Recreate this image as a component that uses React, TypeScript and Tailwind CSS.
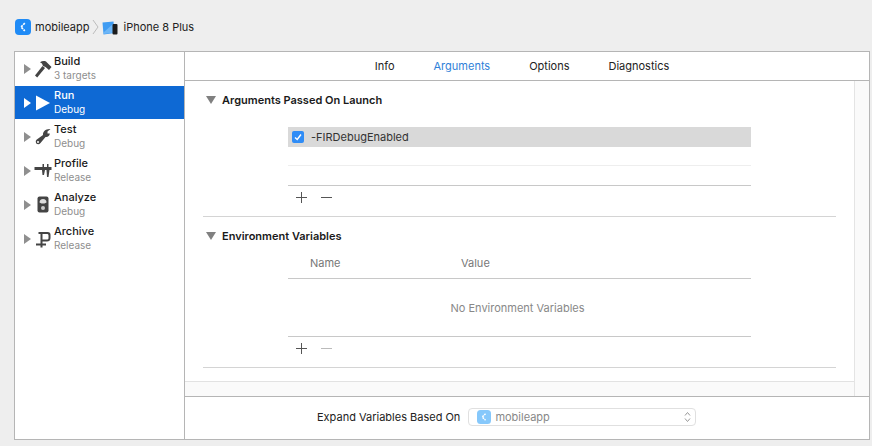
import { Fragment } from "react";

const font = "font-['Inter','Liberation_Sans',sans-serif]";

function Hammer() {
  return (
    <svg width="18" height="18" viewBox="0 0 18 18">
      <path d="M1 15.5 L8.5 6 L11 8 L3.2 17.5 Z" fill="#444" />
      <path d="M6 2.2 C8 1 10 0.8 12 1.5 L17.5 7 L15 10 L11.5 7 L9 6 L8 3.5 Z" fill="#444" />
    </svg>
  );
}

function PlayIcon() {
  return (
    <svg width="16" height="16" viewBox="0 0 16 16">
      <path d="M1 0.5 L15 8 L1 15.5 Z" fill="#fff" />
    </svg>
  );
}

function Wrench() {
  return (
    <svg width="16" height="18" viewBox="0 0 16 18">
      <path d="M15.5 1 L12.5 3.5 L12.5 5.5 L14.8 5.5 C14.8 8 12.5 9.5 10.5 9 L5.5 15 C4 17 1 16.5 0.8 14 C0.6 12.5 1.5 11.8 2.5 11 L8 7 C7.5 3.5 11 0.5 15.5 1 Z" fill="#444" />
      <circle cx="3" cy="14" r="1" fill="#fff" />
    </svg>
  );
}

function Caliper() {
  return (
    <svg width="18" height="14" viewBox="0 0 18 14">
      <path d="M0.5 3 H17.5 V6 H15.5 L14.5 13 H13 L12.5 6 H11 L10 11 H8.5 L8 6 H0.5 Z" fill="#444" />
      <path d="M8.5 0 H10 V3 H8.5 Z M13 0 H14.5 V3 H13 Z" fill="#444" />
    </svg>
  );
}

function Meter() {
  return (
    <svg width="12" height="17" viewBox="0 0 12 17">
      <rect x="0.5" y="0.5" width="11" height="16" rx="2" fill="#444" />
      <path d="M2.5 6.5 A3.5 3.5 0 0 1 9.5 6.5 L7.5 7.5 L4.5 7.5 Z" fill="#ddd" />
      <circle cx="6" cy="12" r="2" fill="#ccc" />
    </svg>
  );
}

function Clamp() {
  return (
    <svg width="16" height="18" viewBox="0 0 16 18">
      <path d="M3.5 2 H12.5 C14.8 2 15.5 3 15.5 5 V8 C15.5 10.5 14 11.5 12 11.5 H7.5 V9.5 H11.5 C13 9.5 13.5 9 13.5 8 V5.5 C13.5 4.5 13 4 12 4 H7.5 V17.5 H5.5 V4 H3.5 Z" fill="#444" />
      <rect x="1" y="13.5" width="10" height="2" fill="#444" />
    </svg>
  );
}

function AppIcon({ size, muted }: { size: number; muted?: boolean }) {
  return (
    <svg width={size} height={size} viewBox="0 0 16 16">
      <rect width="16" height="16" rx="4" fill={muted ? "#86c8fb" : "#1f8bf6"} />
      <path d="M9.8 4.2 L6 8 L9.8 11.8" stroke="#fff" strokeWidth="1.7" fill="none" strokeDasharray="2.2 0.8" />
    </svg>
  );
}

function DeviceIcon() {
  return (
    <svg width="16" height="14" viewBox="0 0 16 14">
      <path d="M0.5 1.5 L11.5 0.5 L12.5 12 L1.5 13.5 Z" fill="#3f9cf2" />
      <path d="M2 11 L11 3 L12 11.5 L2 13 Z" fill="#6db6f7" />
      <rect x="10.5" y="3" width="5" height="10.5" rx="1" fill="#1c1c1c" />
    </svg>
  );
}

const schemes = [
  { name: "Build", sub: "3 targets", Icon: Hammer },
  { name: "Run", sub: "Debug", Icon: PlayIcon, active: true },
  { name: "Test", sub: "Debug", Icon: Wrench },
  { name: "Profile", sub: "Release", Icon: Caliper },
  { name: "Analyze", sub: "Debug", Icon: Meter },
  { name: "Archive", sub: "Release", Icon: Clamp },
];

function SchemeRow({ name, sub, Icon, active }: (typeof schemes)[number]) {
  return (
    <div className="h-[34px]">
      <div className={`flex h-[33px] items-center ${active ? "bg-[#0e69d4] text-white" : "text-[#1a1a1a]"}`}>
        <span
          className={`ml-[9px] h-0 w-0 border-y-[5px] border-l-[7px] border-y-transparent ${
            active ? "border-l-white" : "border-l-[#8f8f8f]"
          }`}
        />
        <span className="flex w-[22px] justify-center pl-[2px]">
          <Icon />
        </span>
        <div className="ml-[1px] mb-[1px] flex flex-col">
          <span className="text-[11px] leading-[14px] font-medium">{name}</span>
          <span className={`text-[10px] leading-[14px] ${active ? "text-white" : "text-[#8e8e8e]"}`}>{sub}</span>
        </div>
      </div>
    </div>
  );
}

function SectionHeader({ title }: { title: string }) {
  return (
    <div className="flex h-[16px] items-center">
      <span className="ml-[21px] h-0 w-0 border-x-[5px] border-t-[8px] border-x-transparent border-t-[#808080]" />
      <span className="ml-[6px] text-[11px] font-semibold text-[#1a1a1a]">{title}</span>
    </div>
  );
}

function PlusMinus({ minusDisabled }: { minusDisabled?: boolean }) {
  return (
    <div className="flex h-[24px] items-center gap-[13px] pl-[8px]">
      <svg width="12" height="12" viewBox="0 0 12 12">
        <path d="M5.5 0 V11 M0 5.5 H11" stroke="#555" strokeWidth="1" />
      </svg>
      <svg width="12" height="12" viewBox="0 0 12 12">
        <path d="M0 5.5 H11" stroke={minusDisabled ? "#bbb" : "#555"} strokeWidth="1" />
      </svg>
    </div>
  );
}

export default function App() {
  return (
    <div className={`${font} flex h-[446px] w-[872px] flex-col overflow-hidden bg-[#eeeeee]`}>
      {/* breadcrumb */}
      <div className="flex h-[51px] items-end pb-[16px] pl-[15px] text-[11px] text-[#222]">
        <AppIcon size={16} />
        <span className="ml-[4px]">mobileapp</span>
        <svg className="mx-[3px]" width="7" height="16" viewBox="0 0 7 16">
          <path d="M1 1 L6 8 L1 15" stroke="#bcbcbc" fill="none" />
        </svg>
        <DeviceIcon />
        <span className="ml-[5px]">iPhone 8 Plus</span>
      </div>

      <div className="ml-[14px] flex h-[389px] w-[856px] border border-[#b5b5b5] bg-white">
        {/* sidebar */}
        <div className="w-[170px] shrink-0 border-r border-[#b5b5b5]">
          {schemes.map((s) => (
            <Fragment key={s.name}>
              <SchemeRow {...s} />
            </Fragment>
          ))}
        </div>

        <div className="flex min-w-0 flex-1 flex-col">
          {/* tabs */}
          <div className="flex h-[29px] shrink-0 items-center justify-center gap-[39px] border-b border-[#b5b5b5] pr-[10px] text-[11px] text-[#222]">
            <span>Info</span>
            <span className="text-[#2f7fd8]">Arguments</span>
            <span>Options</span>
            <span>Diagnostics</span>
          </div>

          <div className="flex min-h-0 flex-1">
            <div className="flex w-[670px] shrink-0 flex-col border-r border-[#e4e4e4]">
              <div className="h-[301px] border-b border-[#e2e2e2] bg-white">
                <div className="pt-[11px]">
                  <SectionHeader title="Arguments Passed On Launch" />
                </div>
                <div className="mr-[103px] ml-[103px] mt-[19px]">
                  <div className="flex h-[20px] items-center bg-[#d9d9d9]">
                    <span className="ml-[4px] flex h-[12px] w-[12px] items-center justify-center rounded-[2px] bg-[#2f8cf6]">
                      <svg width="8" height="8" viewBox="0 0 8 8">
                        <path d="M1 4.5 L3.2 6.5 L7 1.5" stroke="#fff" strokeWidth="1.4" fill="none" />
                      </svg>
                    </span>
                    <span className="ml-[7px] text-[11px] text-[#333]">-FIRDebugEnabled</span>
                  </div>
                  <div className="h-[19px] border-b border-[#eeeeee]" />
                  <div className="h-[20px] border-b border-[#c8c8c8]" />
                  <PlusMinus />
                </div>
                <div className="mx-[18px] mt-[6px] border-b border-[#d4d4d4]" />
                <div className="pt-[11px]">
                  <SectionHeader title="Environment Variables" />
                </div>
                <div className="mx-[103px] mt-[11px]">
                  <div className="flex h-[24px] items-center border-b border-[#c8c8c8] pb-[7px] text-[11px] text-[#777]">
                    <span className="ml-[22px] w-[151px]">Name</span>
                    <span>Value</span>
                  </div>
                  <div className="flex h-[58px] items-center justify-center border-b border-[#c8c8c8] pt-[2px] pr-[4px] text-[11px] text-[#888]">
                    No Environment Variables
                  </div>
                  <PlusMinus minusDisabled />
                </div>
                <div className="mx-[18px] mt-[6px] border-b border-[#d4d4d4]" />
              </div>
              <div className="flex-1 bg-[#fafafa]" />
            </div>
            <div className="flex-1 bg-[#fafafa]" />
          </div>

          {/* footer */}
          <div className="flex h-[43px] shrink-0 items-center border-t border-[#b5b5b5] pb-[2px] text-[11px] text-[#222]">
            <span className="ml-[132px]">Expand Variables Based On</span>
            <div className="ml-[8px] flex h-[18px] w-[228px] items-center rounded-[4px] border border-[#e0e0e0] bg-white pl-[8px]">
              <AppIcon size={14} muted />
              <span className="ml-[4px] flex-1 text-[#888]">mobileapp</span>
              <svg className="mr-[4px]" width="7" height="12" viewBox="0 0 7 12">
                <path d="M1 4.5 L3.5 1.5 L6 4.5 M1 7.5 L3.5 10.5 L6 7.5" stroke="#999" fill="none" />
              </svg>
            </div>
          </div>
        </div>
      </div>
    </div>
  );
}
